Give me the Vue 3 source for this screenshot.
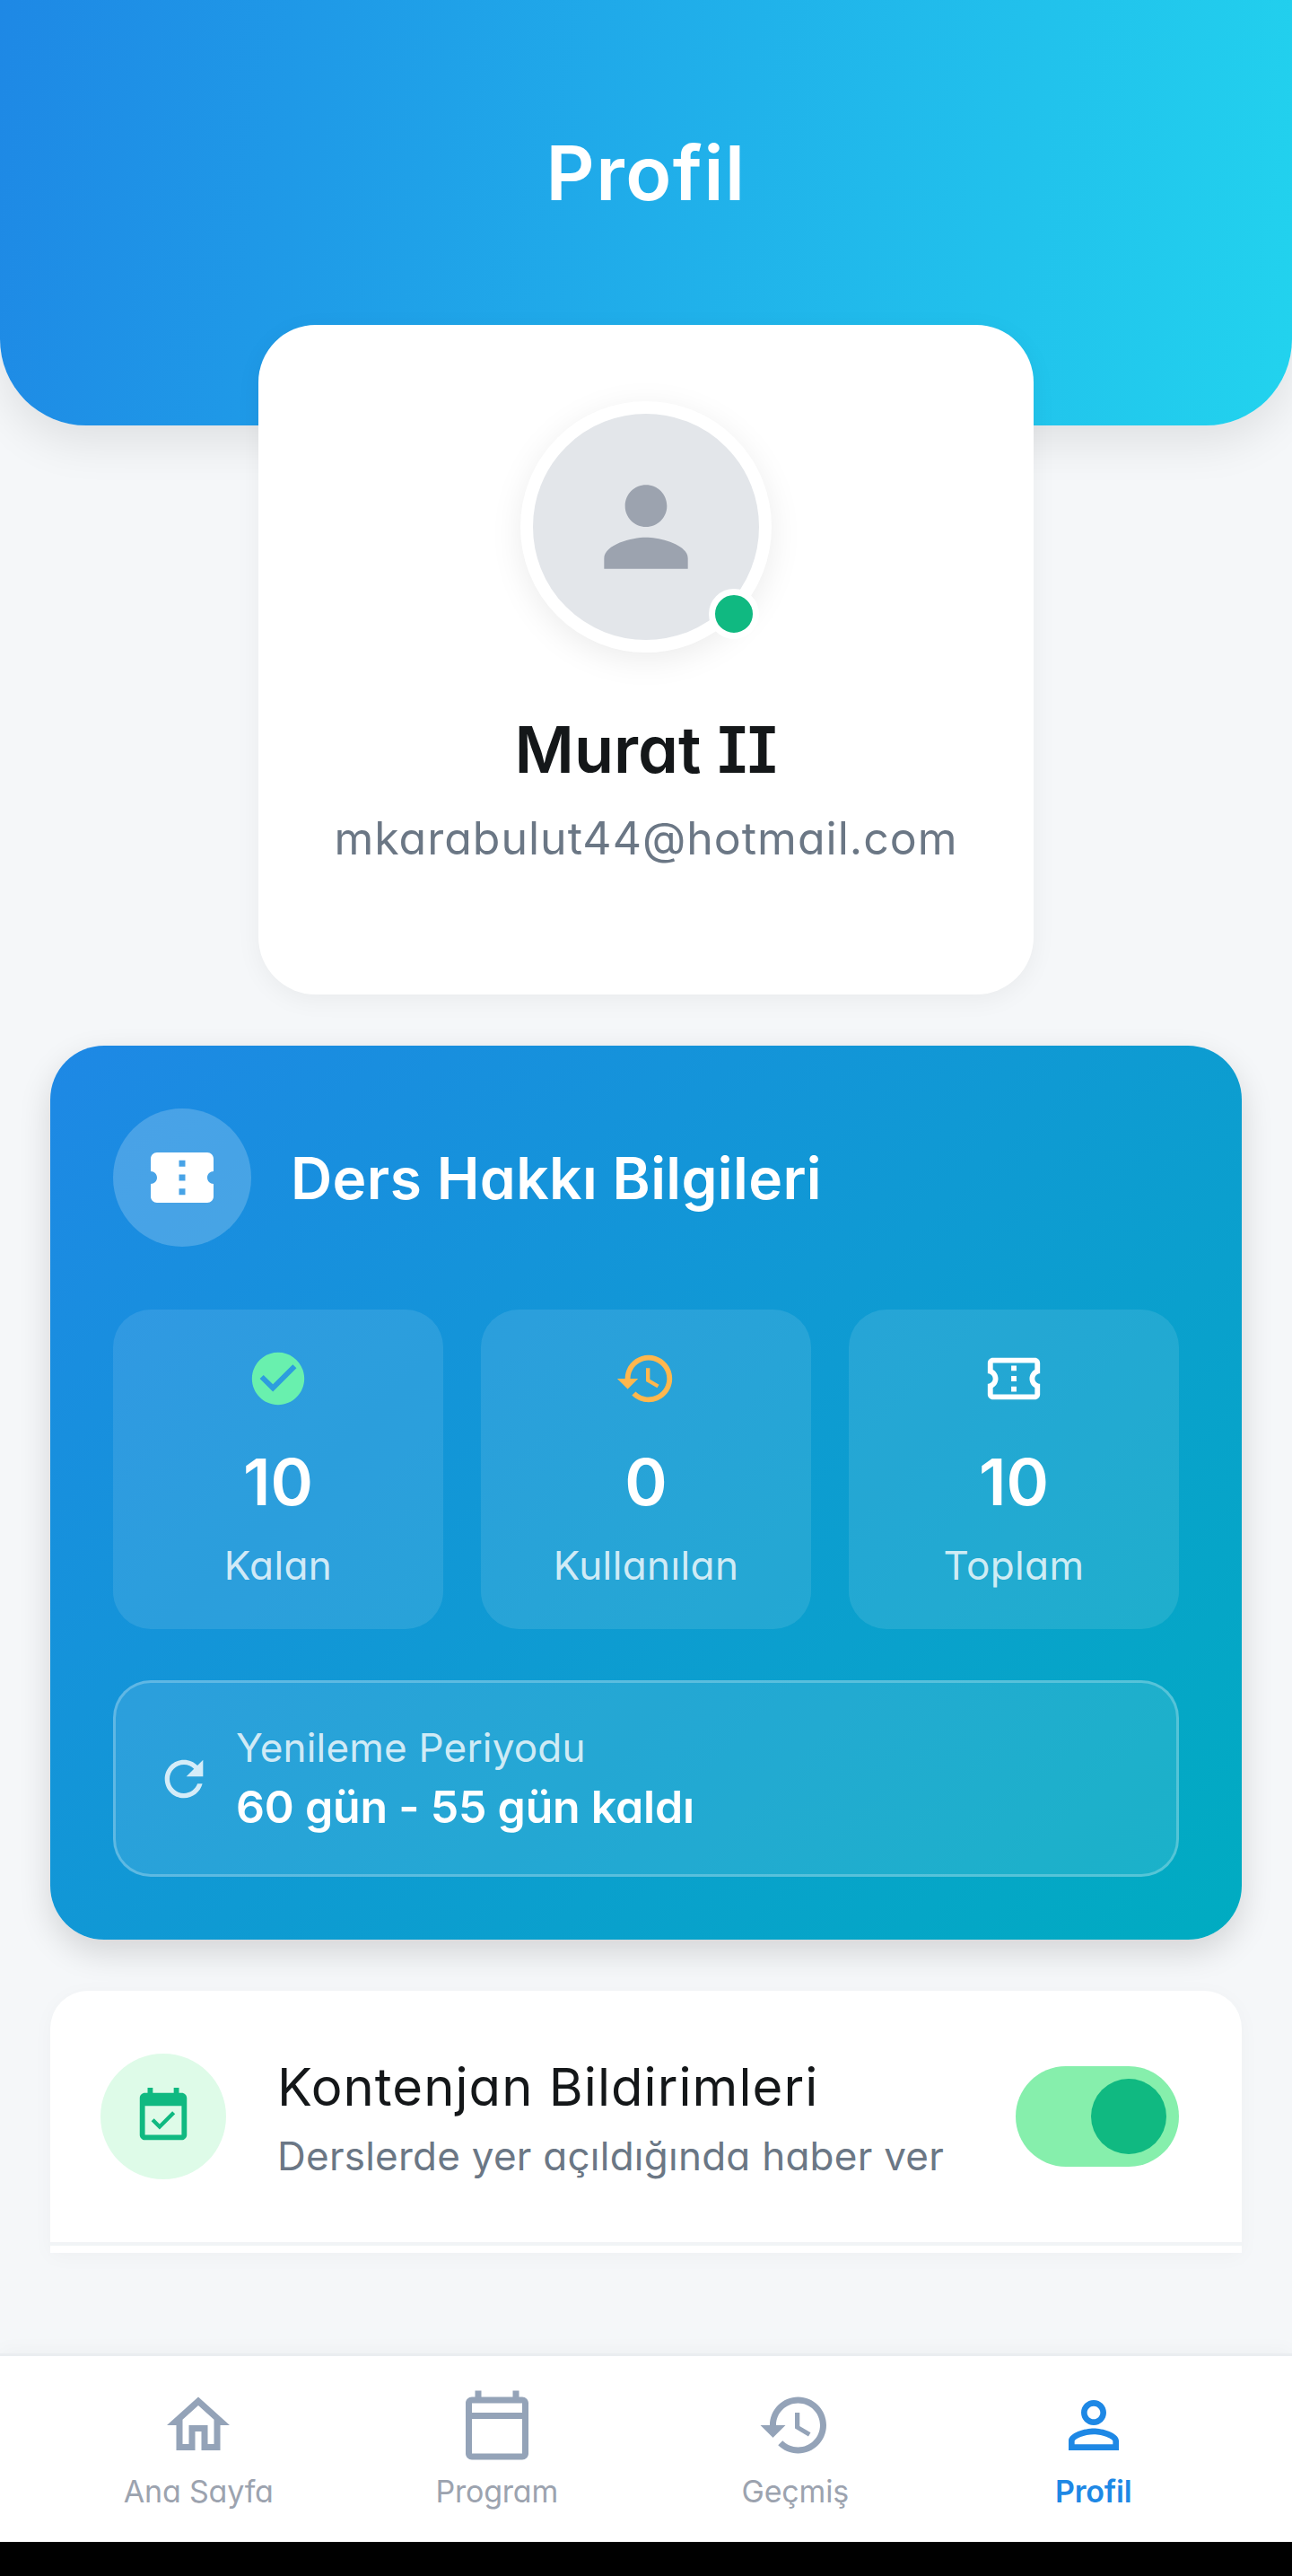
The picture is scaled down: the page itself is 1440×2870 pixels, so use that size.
<script setup>
const stats = [
  { key: 'kalan', value: '10', label: 'Kalan', color: '#69F0AE', path: 'M12 2C6.48 2 2 6.48 2 12s4.48 10 10 10 10-4.48 10-10S17.52 2 12 2zm-2 15l-5-5 1.41-1.41L10 14.17l7.59-7.59L19 8l-9 9z' },
  { key: 'kullanilan', value: '0', label: 'Kullanılan', color: '#FFB74D', path: 'M13 3c-4.97 0-9 4.03-9 9H1l3.89 3.89.07.14L9 12H6c0-3.87 3.13-7 7-7s7 3.13 7 7-3.13 7-7 7c-1.93 0-3.68-.79-4.94-2.06l-1.42 1.42C8.27 19.99 10.51 21 13 21c4.97 0 9-4.03 9-9s-4.03-9-9-9zm-1 5v5l4.28 2.54.72-1.21-3.5-2.08V8H12z' },
  { key: 'toplam', value: '10', label: 'Toplam', color: '#FFFFFF', path: 'M22 10V6c0-1.1-.9-2-2-2H4c-1.1 0-1.99.9-1.99 2v4c1.1 0 1.99.9 1.99 2s-.89 2-2 2v4c0 1.1.9 2 2 2h16c1.1 0 2-.9 2-2v-4c-1.1 0-2-.9-2-2s.9-2 2-2zm-2-1.46c-1.19.69-2 1.99-2 3.46s.81 2.77 2 3.46V18H4v-2.54c1.19-.69 2-1.99 2-3.46 0-1.48-.8-2.77-1.99-3.46L4 6h16v2.54zM11 15h2v2h-2zm0-4h2v2h-2zm0-4h2v2h-2z' }
]
const tabs = [
  { key: 'home', label: 'Ana Sayfa', active: false, path: 'M12 5.69l5 4.5V18h-2v-6H9v6H7v-7.81l5-4.5M12 3L2 12h3v8h6v-6h2v6h6v-8h3L12 3z' },
  { key: 'program', label: 'Program', active: false, path: 'M20 3h-1V1h-2v2H7V1H5v2H4c-1.1 0-2 .9-2 2v16c0 1.1.9 2 2 2h16c1.1 0 2-.9 2-2V5c0-1.1-.9-2-2-2zm0 2v3H4V5h16zM4 21V10h16v11H4z' },
  { key: 'history', label: 'Geçmiş', active: false, path: 'M13 3c-4.97 0-9 4.03-9 9H1l3.89 3.89.07.14L9 12H6c0-3.87 3.13-7 7-7s7 3.13 7 7-3.13 7-7 7c-1.93 0-3.68-.79-4.94-2.06l-1.42 1.42C8.27 19.99 10.51 21 13 21c4.97 0 9-4.03 9-9s-4.03-9-9-9zm-1 5v5l4.28 2.54.72-1.21-3.5-2.08V8H12z' },
  { key: 'profile', label: 'Profil', active: true, path: 'M12 5.9c1.16 0 2.1.94 2.1 2.1s-.94 2.1-2.1 2.1S9.9 9.16 9.9 8s.94-2.1 2.1-2.1m0 9c2.97 0 6.1 1.46 6.1 2.1v1.1H5.9V17c0-.64 3.13-2.1 6.1-2.1M12 4C9.79 4 8 5.79 8 8s1.79 4 4 4 4-1.79 4-4-1.79-4-4-4zm0 9c-2.67 0-8 1.34-8 4v3h16v-3c0-2.66-5.33-4-8-4z' }
]
</script>

<template>
  <div class="screen">
    <main class="content">
      <header class="hero">
        <h1 class="hero-title">Profil</h1>
      </header>

      <section class="profile-card">
        <div class="avatar">
          <svg class="avatar-icon" viewBox="0 0 24 24"><path d="M12 12c2.21 0 4-1.79 4-4s-1.79-4-4-4-4 1.79-4 4 1.79 4 4 4zm0 2c-2.67 0-8 1.34-8 4v2h16v-2c0-2.66-5.33-4-8-4z" /></svg>
          <span class="status-dot"></span>
        </div>
        <h2 class="name">Murat II</h2>
        <p class="email">mkarabulut44@hotmail.com</p>
      </section>

      <section class="rights-card">
        <div class="rights-head">
          <div class="rights-icon">
            <svg viewBox="0 0 24 24"><path d="M22 10V6c0-1.11-.9-2-2-2H4c-1.1 0-1.99.89-1.99 2v4c1.1 0 1.99.9 1.99 2s-.89 2-2 2v4c0 1.1.9 2 2 2h16c1.1 0 2-.9 2-2v-4c-1.1 0-2-.9-2-2s.9-2 2-2zm-9 7.5h-2v-2h2v2zm0-4.5h-2v-2h2v2zm0-4.5h-2v-2h2v2z" fill-rule="evenodd" /></svg>
          </div>
          <h3 class="rights-title">Ders Hakkı Bilgileri</h3>
        </div>

        <div class="stats">
          <div v-for="s in stats" :key="s.key" class="stat">
            <svg class="stat-icon" viewBox="0 0 24 24"><path :d="s.path" :fill="s.color" /></svg>
            <div class="stat-value">{{ s.value }}</div>
            <div class="stat-label">{{ s.label }}</div>
          </div>
        </div>

        <div class="renewal">
          <svg class="renewal-icon" viewBox="0 0 24 24"><path d="M17.65 6.35C16.2 4.9 14.21 4 12 4c-4.42 0-7.99 3.58-7.99 8s3.57 8 7.99 8c3.73 0 6.84-2.55 7.73-6h-2.08c-.82 2.33-3.04 4-5.65 4-3.31 0-6-2.69-6-6s2.69-6 6-6c1.66 0 3.14.69 4.22 1.78L13 11h7V4l-2.35 2.35z" /></svg>
          <div class="renewal-text">
            <div class="renewal-label">Yenileme Periyodu</div>
            <div class="renewal-value">60 gün - 55 gün kaldı</div>
          </div>
        </div>
      </section>

      <section class="settings-card">
        <div class="setting-row">
          <div class="setting-icon">
            <svg viewBox="0 0 24 24"><path d="M16.53 11.06L15.47 10l-4.88 4.88-2.12-2.12-1.06 1.06L10.59 17l5.94-5.94zM19 3h-1V1h-2v2H8V1H6v2H5c-1.11 0-1.99.9-1.99 2L3 19c0 1.1.89 2 2 2h14c1.1 0 2-.9 2-2V5c0-1.1-.9-2-2-2zm0 16H5V8h14v11z" /></svg>
          </div>
          <div class="setting-text">
            <div class="setting-title">Kontenjan Bildirimleri</div>
            <div class="setting-sub">Derslerde yer açıldığında haber ver</div>
          </div>
          <div class="toggle"><span class="toggle-thumb"></span></div>
        </div>
        <div class="setting-divider"></div>
      </section>
    </main>

    <nav class="tabbar">
      <div v-for="t in tabs" :key="t.key" class="tab" :class="{ active: t.active }">
        <svg class="tab-icon" viewBox="0 0 24 24"><path :d="t.path" /></svg>
        <span class="tab-label">{{ t.label }}</span>
      </div>
    </nav>
    <div class="system-bar"></div>
  </div>
</template>

<style>
html, body { margin: 0; background: #000; }
</style>

<style scoped>
* { box-sizing: border-box; }
.screen {
  width: 1440px;
  height: 2870px;
  display: flex;
  flex-direction: column;
  background: #f5f7f9;
  font-family: Inter, "Noto Sans", sans-serif;
  font-feature-settings: "cv11", "cv08";
  overflow: hidden;
}
.content { height: 2622px; flex: none; overflow: hidden; }

.hero {
  height: 474px;
  padding-top: 143px;
  background: linear-gradient(100deg, #1e88e5 0%, #22d3ee 100%);
  border-radius: 0 0 96px 96px;
  box-shadow: 0 20px 50px rgba(0, 0, 0, 0.09);
}
.hero-title {
  margin: 0;
  height: 100px;
  line-height: 100px;
  font-size: 84px;
  font-weight: 600;
  letter-spacing: 1.5px;
  text-align: center;
  color: #fff;
}

.profile-card {
  position: relative;
  width: 864px;
  height: 746px;
  margin: -112px auto 0;
  padding-top: 85px;
  background: #fff;
  border-radius: 64px;
  box-shadow: 0 6px 28px rgba(0, 0, 0, 0.05);
  display: flex;
  flex-direction: column;
  align-items: center;
}
.avatar {
  position: relative;
  width: 280px;
  height: 280px;
  border: 14px solid #fff;
  border-radius: 50%;
  background: #e3e6ea;
  box-shadow: 0 8px 36px rgba(0, 0, 0, 0.08);
  display: flex;
  align-items: center;
  justify-content: center;
}
.avatar-icon { width: 140px; height: 140px; fill: #9ca3af; }
.status-dot {
  position: absolute;
  left: 196px;
  top: 195px;
  width: 56px;
  height: 56px;
  border: 7px solid #fff;
  border-radius: 50%;
  background: #10b981;
}
.name {
  margin: 63px 0 0;
  height: 90px;
  line-height: 90px;
  font-size: 72px;
  font-weight: 600;
  color: #141719;
}
.email {
  margin: 24px 0 0;
  height: 60px;
  line-height: 60px;
  font-size: 50px;
  font-weight: 400;
  letter-spacing: 1px;
  color: #6b7785;
}

.rights-card {
  margin: 57px 56px 0;
  height: 996px;
  padding: 70px;
  border-radius: 60px;
  background: linear-gradient(135deg, #1e88e5 0%, #00acc1 100%);
  box-shadow: 0 14px 36px rgba(0, 0, 0, 0.14);
}
.rights-head { display: flex; align-items: center; gap: 44px; height: 154px; }
.rights-icon {
  width: 154px;
  height: 154px;
  border-radius: 50%;
  background: rgba(255, 255, 255, 0.2);
  display: flex;
  align-items: center;
  justify-content: center;
}
.rights-icon svg { width: 84px; height: 84px; fill: #fff; }
.rights-title {
  margin: 0;
  font-size: 64px;
  font-weight: 600;
  letter-spacing: 0.4px;
  color: #fff;
  white-space: nowrap;
}
.stats {
  margin-top: 70px;
  display: grid;
  grid-template-columns: repeat(3, 1fr);
  gap: 42px;
}
.stat {
  height: 356px;
  padding-top: 42px;
  border-radius: 42px;
  background: rgba(255, 255, 255, 0.1);
  display: flex;
  flex-direction: column;
  align-items: center;
}
.stat-icon { width: 70px; height: 70px; }
.stat-value {
  margin-top: 35px;
  height: 90px;
  line-height: 90px;
  font-size: 72px;
  font-weight: 600;
  color: #fff;
}
.stat-label {
  margin-top: 20px;
  height: 56px;
  line-height: 56px;
  font-size: 44px;
  letter-spacing: 0.4px;
  color: rgba(255, 255, 255, 0.8);
}
.renewal {
  margin-top: 57px;
  height: 219px;
  padding-left: 44px;
  border: 3px solid rgba(255, 255, 255, 0.25);
  border-radius: 42px;
  background: rgba(255, 255, 255, 0.1);
  display: flex;
  align-items: center;
  gap: 26px;
}
.renewal-icon { width: 64px; height: 64px; fill: rgba(255, 255, 255, 0.8); flex: none; }
.renewal-label {
  height: 56px;
  line-height: 56px;
  font-size: 44px;
  letter-spacing: 0.2px;
  color: rgba(255, 255, 255, 0.8);
}
.renewal-value {
  margin-top: 6px;
  height: 64px;
  line-height: 64px;
  font-size: 50px;
  font-weight: 600;
  letter-spacing: -0.2px;
  color: #fff;
}

.settings-card {
  margin: 57px 56px 0;
  height: 292px;
  background: #fff;
  border-radius: 42px 42px 0 0;
  box-shadow: 0 4px 24px rgba(0, 0, 0, 0.03);
}
.setting-row {
  height: 280px;
  padding: 0 70px 0 56px;
  display: flex;
  align-items: center;
}
.setting-icon {
  width: 140px;
  height: 140px;
  flex: none;
  border-radius: 50%;
  background: #defbe8;
  display: flex;
  align-items: center;
  justify-content: center;
}
.setting-icon svg { width: 70px; height: 70px; fill: #10b981; }
.setting-text { margin-left: 57px; padding-top: 6px; flex: 1; }
.setting-title {
  height: 70px;
  line-height: 70px;
  font-size: 58px;
  letter-spacing: 1.05px;
  color: #141719;
}
.setting-sub {
  margin-top: 12px;
  height: 60px;
  line-height: 60px;
  font-size: 44px;
  letter-spacing: 0.25px;
  color: #6b7785;
}
.toggle {
  width: 182px;
  height: 112px;
  flex: none;
  padding-right: 14px;
  border-radius: 56px;
  background: #86efac;
  display: flex;
  align-items: center;
  justify-content: flex-end;
}
.toggle-thumb { width: 84px; height: 84px; border-radius: 50%; background: #10b981; }
.setting-divider { height: 4px; background: #f1f4f6; }

.tabbar {
  height: 210px;
  flex: none;
  padding: 35px 55px 0;
  background: #fff;
  border-top: 3px solid #eaedf0;
  box-shadow: 0 -4px 20px rgba(0, 0, 0, 0.03);
  display: grid;
  grid-template-columns: repeat(4, 1fr);
}
.tab { display: flex; flex-direction: column; align-items: center; }
.tab-icon { width: 84px; height: 84px; fill: #94a3b8; }
.tab-label {
  margin-top: 8px;
  height: 48px;
  line-height: 48px;
  font-size: 34px;
  letter-spacing: -0.2px;
  color: #9ca3af;
}
.tab.active .tab-icon { fill: #1e88e5; }
.tab.active .tab-label { color: #1e88e5; font-weight: 600; }
.system-bar { height: 38px; flex: none; background: #000; }
</style>
